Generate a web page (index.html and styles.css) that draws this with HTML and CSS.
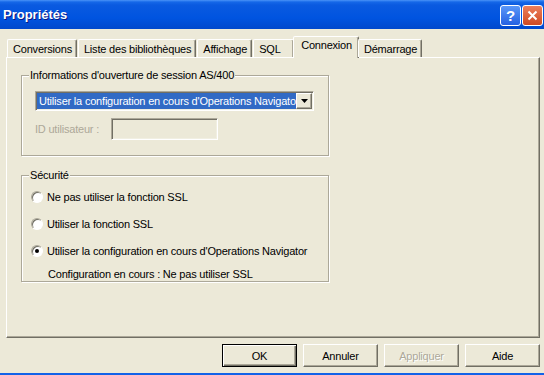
FILE: index.html
```html
<!DOCTYPE html>
<html>

<head>
    <meta charset="utf-8">
    <title>Propriétés</title>
    <link rel="stylesheet" href="styles.css">
</head>

<body>
    <div class="window">
        <div class="titlebar">
            <span class="title">Propriétés</span>
            <div class="caption-buttons">
                <span class="cap-btn help">?</span>
                <span class="cap-btn close">
                    <svg width="11" height="11" viewBox="0 0 11 11">
                        <path d="M1.5 1.5 L9.5 9.5 M9.5 1.5 L1.5 9.5" stroke="#fff" stroke-width="2" fill="none"/>
                    </svg>
                </span>
            </div>
        </div>

        <div class="tabs">
            <span class="tab">Conversions</span>
            <span class="tab">Liste des bibliothèques</span>
            <span class="tab">Affichage</span>
            <span class="tab">SQL</span>
            <span class="tab active">Connexion</span>
            <span class="tab">Démarrage</span>
        </div>

        <div class="panel">
            <fieldset class="group login">
                <legend>Informations d'ouverture de session AS/400</legend>
                <div class="group-body">
                    <div class="combo">
                        <span class="combo-value">Utiliser la configuration en cours d'Operations Navigator</span>
                        <span class="combo-btn">
                            <svg width="7" height="4" viewBox="0 0 7 4"><path d="M0 0 H7 L3.5 4 Z" fill="#000"/></svg>
                        </span>
                    </div>
                    <div class="field-row">
                        <span class="label disabled">ID utilisateur :</span>
                        <span class="textbox"></span>
                    </div>
                </div>
            </fieldset>

            <fieldset class="group security">
                <legend>Sécurité</legend>
                <div class="options">
                    <div class="option"><span class="radio"></span>Ne pas utiliser la fonction SSL</div>
                    <div class="option"><span class="radio"></span>Utiliser la fonction SSL</div>
                    <div class="option"><span class="radio checked"></span>Utiliser la configuration en cours d'Operations Navigator</div>
                    <div class="note">Configuration en cours : Ne pas utiliser SSL</div>
                </div>
            </fieldset>
        </div>

        <div class="buttons">
            <button class="default">OK</button>
            <button>Annuler</button>
            <button class="disabled">Appliquer</button>
            <button>Aide</button>
        </div>

        <div class="frame-bottom"></div>
    </div>
</body>

</html>
```

FILE: styles.css
```css
body {
    margin: 0;
    background-color: #ECE9D8;
    font-family: "Liberation Sans", Arial, sans-serif;
    font-size: 11px;
    letter-spacing: -0.2px;
    color: #000;
}

.window {
    height: 375px;
    display: flex;
    flex-direction: column;
    overflow: hidden;
}

/* barre de titre */
.titlebar {
    flex: none;
    height: 29px;
    display: flex;
    justify-content: space-between;
    padding-left: 3px;
    background: linear-gradient(to bottom, #4a93f7 0, #1568e8 2px, #0a5ae0 5px, #0054e0 18px, #0048cc 29px);
    color: #fff;
}

.title {
    align-self: center;
    font-weight: bold;
    font-size: 13px;
    letter-spacing: 0;
    text-shadow: 1px 1px #0a1883;
}

.caption-buttons {
    display: flex;
    gap: 1px;
    margin-top: 5px;
    margin-right: 1px;
}

.cap-btn {
    width: 21px;
    height: 21px;
    box-sizing: border-box;
    border: 1px solid #fff;
    border-radius: 3px;
    display: flex;
    align-items: center;
    justify-content: center;
}

.help {
    background: linear-gradient(to bottom, #5a97f8, #2461e2);
    font-weight: bold;
    font-size: 15px;
    letter-spacing: 0;
}

.close {
    background: linear-gradient(to bottom, #ec7f5c, #d04a22);
}

/* onglets */
.tabs {
    display: flex;
    align-items: flex-end;
    gap: 1px;
    height: 21px;
    margin-top: 7px;
    padding-left: 7px;
    position: relative;
    z-index: 1;
}

.tab {
    min-width: 41px;
    height: 18px;
    box-sizing: border-box;
    padding: 2px 4px 0 5px;
    border: 1px solid;
    border-bottom: none;
    border-color: #fff #716f64 transparent #fff;
    border-radius: 2px 2px 0 0;
    box-shadow: inset -1px 0 #aca899;
    line-height: 14px;
    white-space: nowrap;
}

.tab.active {
    height: 22px;
    margin: 0 -2px -1px -2px;
    padding: 1px 6px 0 7px;
    background-color: #ECE9D8;
}

/* page */
.panel {
    height: 281px;
    box-sizing: border-box;
    margin: 0 4px 0 6px;
    border: 1px solid;
    border-color: #fff #716f64 #716f64 #fff;
    box-shadow: inset -1px -1px #aca899;
    padding: 10px 0 0 14px;
}

.group {
    width: 308px;
    box-sizing: border-box;
    margin: 0;
    padding: 9px 0 15px 7px;
    border: 1px solid #aca899;
    box-shadow: inset 1px 1px #fff, 1px 1px #fff;
}

.group legend {
    padding: 0 1px;
    line-height: 14px;
    background-color: #ECE9D8;
}

.group-body {
    margin-left: 6px;
}

.combo {
    width: 279px;
    height: 20px;
    box-sizing: border-box;
    display: flex;
    border: 1px solid;
    border-color: #aca899 #fff #fff #aca899;
    box-shadow: inset 1px 1px #716f64, inset -1px -1px #f1efe2;
    padding: 1px;
    background-color: #fff;
}

.combo-value {
    flex: 1;
    overflow: hidden;
    white-space: nowrap;
    padding-left: 2px;
    line-height: 16px;
    background-color: #316ac5;
    color: #fff;
}

.combo-btn {
    width: 16px;
    box-sizing: border-box;
    display: flex;
    align-items: center;
    justify-content: center;
    border: 1px solid;
    border-color: #fff #716f64 #716f64 #fff;
    box-shadow: inset -1px -1px #aca899;
    background-color: #ECE9D8;
}

.field-row {
    display: flex;
    align-items: center;
    margin-top: 7px;
}

.label {
    width: 76px;
    flex: none;
}

.disabled {
    color: #aca899;
}

.textbox {
    width: 107px;
    height: 22px;
    box-sizing: border-box;
    border: 1px solid;
    border-color: #aca899 #fff #fff #aca899;
    box-shadow: inset 1px 1px #716f64, inset -1px -1px #f1efe2;
}

.security {
    margin-top: 12px;
    padding: 8px 0 0 7px;
}

.options {
    display: flex;
    flex-direction: column;
    gap: 13px;
}

.option {
    display: flex;
    align-items: center;
    gap: 4px;
    height: 14px;
    margin-left: 2px;
}

.radio {
    width: 12px;
    height: 12px;
    box-sizing: border-box;
    border-radius: 50%;
    border: 1px solid;
    border-color: #aca899 #fff #fff #aca899;
    box-shadow: inset 1px 1px #716f64;
    background-color: #fff;
    display: flex;
    align-items: center;
    justify-content: center;
}

.radio.checked::after {
    content: "";
    width: 4px;
    height: 4px;
    border-radius: 50%;
    background-color: #000;
}

.note {
    height: 14px;
    line-height: 14px;
    margin: -4px 0 0 19px;
}

/* boutons */
.buttons {
    display: flex;
    justify-content: flex-end;
    gap: 6px;
    padding: 6px 4px 0 0;
}

.buttons button {
    width: 75px;
    height: 23px;
    padding: 0;
    font-family: "Liberation Sans", Arial, sans-serif;
    font-size: 11px;
    letter-spacing: -0.2px;
    color: #000;
    background-color: #ECE9D8;
    border: 1px solid;
    border-color: #fff #716f64 #716f64 #fff;
    box-shadow: inset -1px -1px #aca899;
}

.buttons .default {
    border-color: #000;
    box-shadow: inset 1px 1px #fff, inset -1px -1px #716f64, inset -2px -2px #aca899;
}

.buttons .disabled {
    color: #aca899;
    text-shadow: 1px 1px #fff;
}

.frame-bottom {
    margin-top: auto;
    height: 2px;
    background-color: #1262e8;
}
```
